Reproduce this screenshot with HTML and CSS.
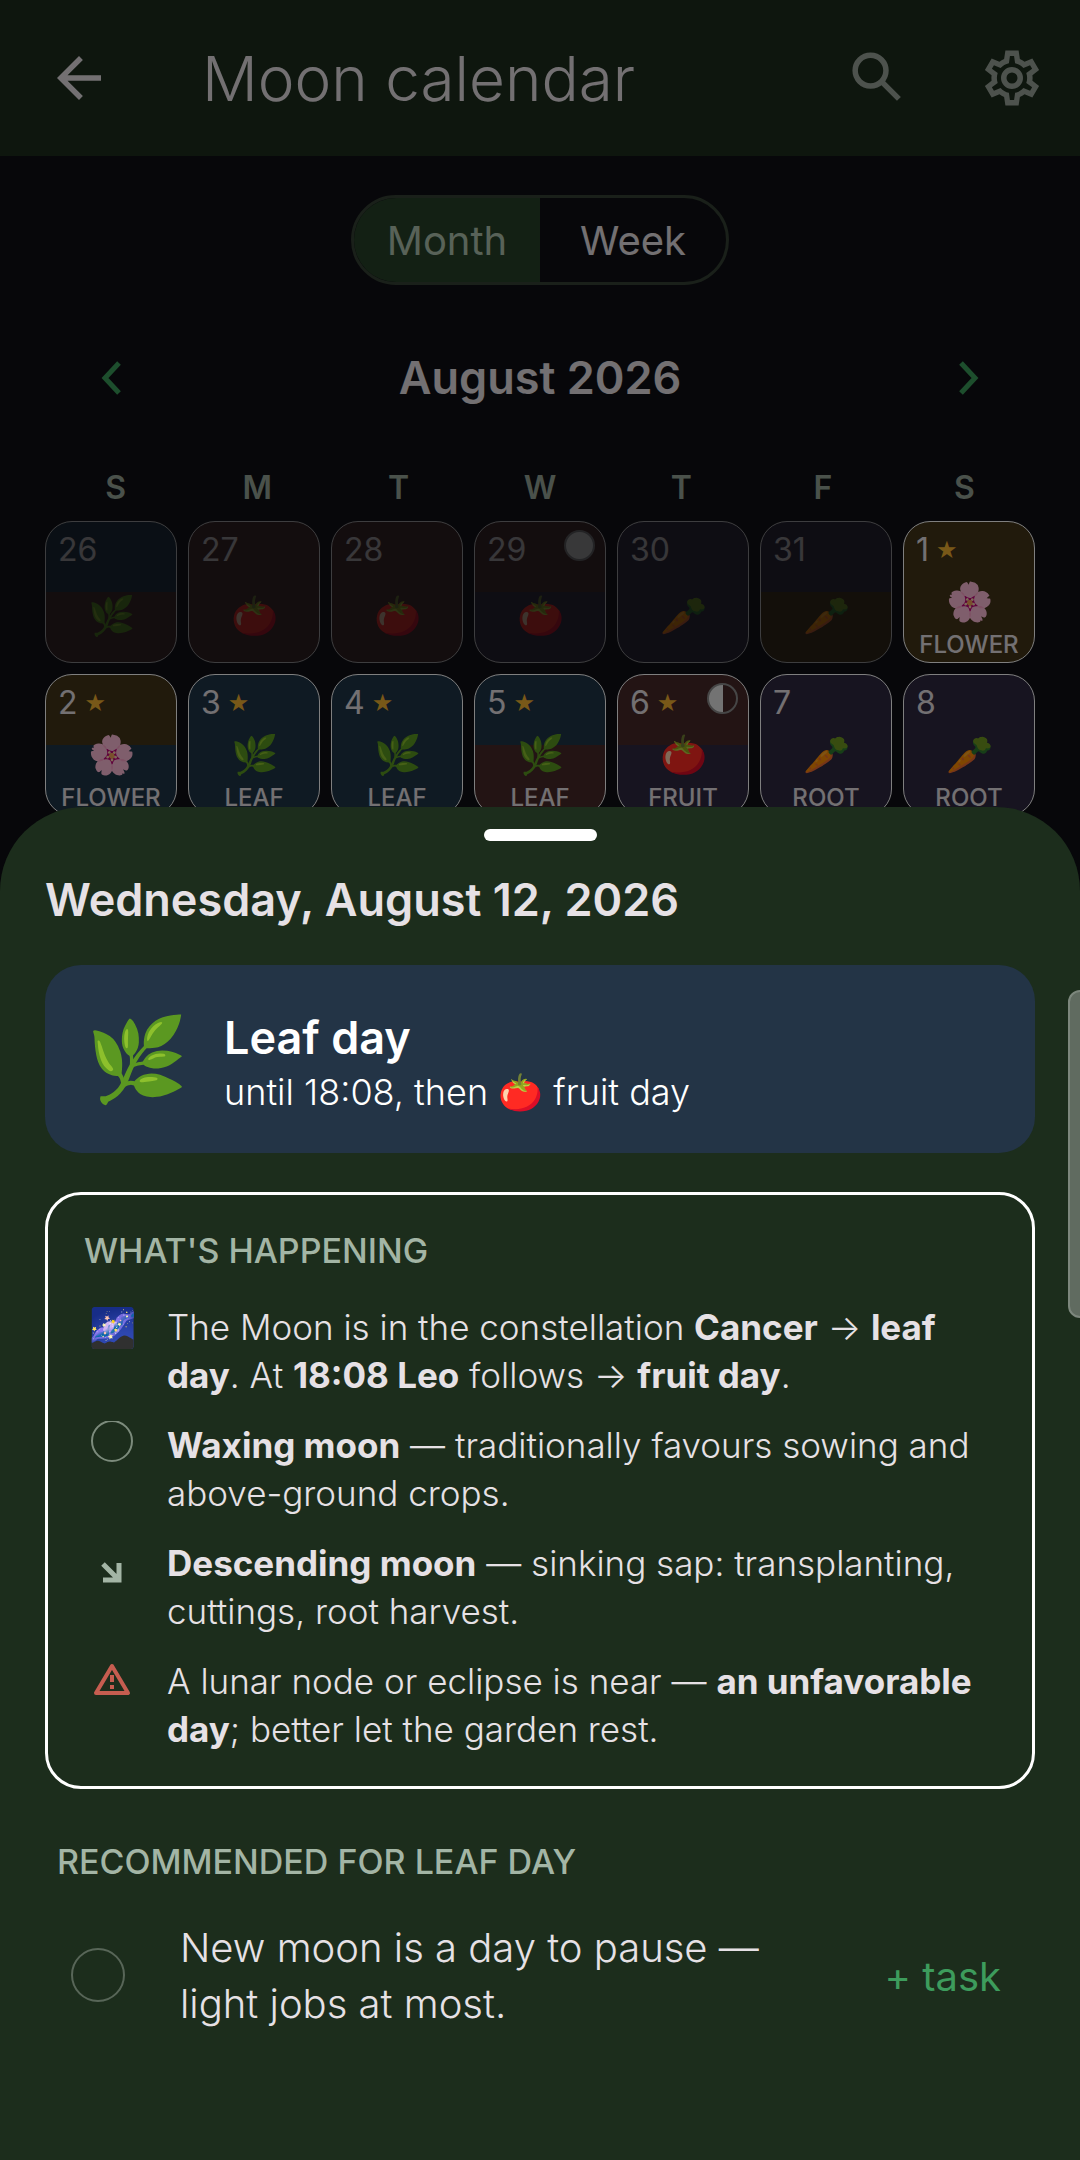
FILE: index.html
```
<!DOCTYPE html>
<html lang="en">
<head>
  <meta charset="UTF-8">
  <meta name="viewport" content="width=device-width, initial-scale=1.0">
  <title>Moon calendar</title>
  <link rel="stylesheet" href="styles.css">
</head>
<body>
  <header class="app-bar">
    <button class="icon-btn back" aria-label="Back">
      <svg viewBox="0 0 24 24" fill="currentColor"><path d="M20 11H7.83l5.59-5.59L12 4l-8 8 8 8 1.41-1.41L7.83 13H20v-2z"/></svg>
    </button>
    <h1>Moon calendar</h1>
    <button class="icon-btn" aria-label="Search">
      <svg viewBox="0 0 24 24" fill="none" stroke="currentColor" stroke-width="2"><circle cx="9.3" cy="9.3" r="5.6"/><path d="M13.4 13.4 19.6 19.6"/></svg>
    </button>
    <button class="icon-btn" aria-label="Settings">
      <svg viewBox="0 0 24 24" fill="currentColor" fill-rule="evenodd"><path d="M12 8a4 4 0 1 1 0 8 4 4 0 0 1 0-8m0 2a2 2 0 1 0 0 4 2 2 0 0 0 0-4M9.6 22 9.13 18.93C8.5 18.68 7.96 18.34 7.44 17.94L4.6 19.1 2.15 14.9 4.57 12.97 4.5 12 4.57 11 2.15 9.1 4.6 4.9 7.44 6.05C7.96 5.66 8.5 5.32 9.13 5.07L9.6 2H14.4L14.87 5.07C15.5 5.32 16.04 5.66 16.56 6.05L19.4 4.9 21.85 9.1 19.43 11 19.5 12 19.43 13 21.85 14.9 19.4 19.1 16.56 17.95C16.04 18.34 15.5 18.68 14.87 18.93L14.4 22H9.6M11.25 4L10.88 6.61C9.68 6.86 8.62 7.5 7.85 8.39L5.44 7.35 4.69 8.65 6.8 10.2C6.4 11.37 6.4 12.64 6.8 13.8L4.68 15.36 5.43 16.66 7.86 15.62C8.63 16.5 9.68 17.14 10.87 17.38L11.24 20H12.76L13.13 17.39C14.32 17.14 15.37 16.5 16.14 15.62L18.57 16.66 19.32 15.36 17.2 13.81C17.6 12.64 17.6 11.37 17.2 10.2L19.31 8.65 18.56 7.35 16.15 8.39C15.38 7.5 14.32 6.86 13.12 6.62L12.75 4H11.25Z"/></svg>
    </button>
  </header>

  <main class="calendar">
    <div class="view-toggle">
      <button class="active" aria-pressed="true">Month</button>
      <button aria-pressed="false">Week</button>
    </div>

    <div class="month-nav">
      <button aria-label="Previous month">
        <svg viewBox="0 0 20 34" fill="none" stroke="currentColor" stroke-width="5"><path d="M18 2 4 17l14 15"/></svg>
      </button>
      <h2>August 2026</h2>
      <button aria-label="Next month">
        <svg viewBox="0 0 20 34" fill="none" stroke="currentColor" stroke-width="5"><path d="M2 2l14 15L2 32"/></svg>
      </button>
    </div>

    <div class="weekdays">
      <span>S</span><span>M</span><span>T</span><span>W</span><span>T</span><span>F</span><span>S</span>
    </div>

    <div class="days">
      <button class="day leaf to-fruit outside"><span class="num">26</span><span class="emoji">🌿</span></button>
      <button class="day fruit outside"><span class="num">27</span><span class="emoji">🍅</span></button>
      <button class="day fruit outside"><span class="num">28</span><span class="emoji">🍅</span></button>
      <button class="day fruit to-root outside"><span class="num">29</span><span class="emoji">🍅</span><i class="phase full"></i></button>
      <button class="day root outside"><span class="num">30</span><span class="emoji">🥕</span></button>
      <button class="day root to-flower outside"><span class="num">31</span><span class="emoji">🥕</span></button>
      <button class="day flower"><span class="num">1<span class="star">★</span></span><span class="emoji">🌸</span><span class="type">FLOWER</span></button>

      <button class="day flower to-leaf"><span class="num">2<span class="star">★</span></span><span class="emoji">🌸</span><span class="type">FLOWER</span></button>
      <button class="day leaf"><span class="num">3<span class="star">★</span></span><span class="emoji">🌿</span><span class="type">LEAF</span></button>
      <button class="day leaf"><span class="num">4<span class="star">★</span></span><span class="emoji">🌿</span><span class="type">LEAF</span></button>
      <button class="day leaf to-fruit"><span class="num">5<span class="star">★</span></span><span class="emoji">🌿</span><span class="type">LEAF</span></button>
      <button class="day fruit to-root"><span class="num">6<span class="star">★</span></span><span class="emoji">🍅</span><span class="type">FRUIT</span><i class="phase half"></i></button>
      <button class="day root"><span class="num">7</span><span class="emoji">🥕</span><span class="type">ROOT</span></button>
      <button class="day root"><span class="num">8</span><span class="emoji">🥕</span><span class="type">ROOT</span></button>
    </div>
  </main>

  <div class="scrim"></div>

  <section class="sheet">
    <div class="handle"></div>
    <h2>Wednesday, August 12, 2026</h2>

    <div class="day-card">
      <span class="day-emoji">🌿</span>
      <div class="day-text">
        <h3>Leaf day</h3>
        <p>until 18:08, then 🍅 fruit day</p>
      </div>
    </div>

    <div class="happening">
      <h4>WHAT'S HAPPENING</h4>
      <ul>
        <li>
          <span class="mark">🌌</span>
          <p>The Moon is in the constellation <b>Cancer</b> → <b>leaf day</b>. At <b>18:08 Leo</b> follows → <b>fruit day</b>.</p>
        </li>
        <li>
          <svg class="mark moon" viewBox="0 0 48 48" fill="none" stroke="currentColor" stroke-width="2"><circle cx="24" cy="20" r="20"/></svg>
          <p><b>Waxing moon</b> — traditionally favours sowing and above-ground crops.</p>
        </li>
        <li>
          <svg class="mark" viewBox="0 0 48 48" fill="none" stroke="currentColor" stroke-width="5"><path d="M15 25 30 40M31 24V41H15"/></svg>
          <p><b>Descending moon</b> — sinking sap: transplanting, cuttings, root harvest.</p>
        </li>
        <li>
          <svg class="mark warning" viewBox="0 0 48 48" fill="none" stroke="currentColor" stroke-width="4" stroke-linejoin="round"><path d="M24 9 40 36H8Z"/><path d="M24 18v7M24 28v4"/></svg>
          <p>A lunar node or eclipse is near — <b>an unfavorable day</b>; better let the garden rest.</p>
        </li>
      </ul>
    </div>

    <h4 class="section-title">RECOMMENDED FOR LEAF DAY</h4>
    <div class="task">
      <svg class="task-moon" viewBox="0 0 56 56" fill="none" stroke="currentColor" stroke-width="2"><circle cx="28" cy="27" r="26"/></svg>
      <p>New moon is a day to pause — light jobs at most.</p>
      <button>+ task</button>
    </div>
  </section>

  <div class="edge-handle"></div>
</body>
</html>
```
FILE: styles.css
```
* {
  margin: 0;
  padding: 0;
  box-sizing: border-box;
}

body {
  background: #0f0f14;
  color: #e6e1e5;
  font-family: Inter, 'Open Sans', sans-serif;
  font-weight: 300;
  min-height: 100vh;
  overflow: hidden;
}

button {
  background: none;
  border: none;
  color: inherit;
  font: inherit;
  cursor: pointer;
}

svg {
  display: block;
}

/* App bar */
.app-bar {
  display: flex;
  align-items: center;
  gap: 68px;
  height: 156px;
  padding: 0 35px 0 46px;
  background: #1c2c1c;
}

.app-bar h1 {
  flex: 1;
  margin-left: 22px;
  font-size: 62px;
  font-weight: 300;
}

.icon-btn {
  width: 66px;
  height: 66px;
  color: #9ba59b;
}

.icon-btn.back {
  color: #e6e1e5;
}

/* Month view */
.calendar {
  padding: 39px 45px;
}

.view-toggle {
  display: flex;
  width: 378px;
  height: 90px;
  margin: 0 auto;
  border: 3px solid #344034;
  border-radius: 45px;
  overflow: hidden;
}

.view-toggle button {
  flex: 1;
  font-size: 40px;
  font-weight: 400;
}

.view-toggle .active {
  background: #264028;
  color: #b0c4b0;
}

.month-nav {
  display: flex;
  align-items: center;
  justify-content: space-between;
  margin-top: 63px;
  padding: 0 56px;
}

.month-nav h2 {
  font-size: 45px;
  font-weight: 600;
  line-height: 60px;
}

.month-nav button {
  width: 20px;
  color: #3a9c5a;
}

.weekdays {
  display: grid;
  grid-template-columns: repeat(7, 1fr);
  margin-top: 60px;
  font-size: 32px;
  font-weight: 600;
  line-height: 40px;
  text-align: center;
  color: #94a396;
}

.days {
  display: grid;
  grid-template-columns: repeat(7, 1fr);
  gap: 11px;
  margin-top: 13px;
}

.day {
  --from: #2e2840;
  --to: var(--from);
  position: relative;
  display: flex;
  flex-direction: column;
  height: 142px;
  padding: 8px 0 3px;
  border: 1px solid #ffffff;
  border-radius: 27px;
  background: linear-gradient(var(--from) 50%, var(--to) 50%);
}

.leaf { --from: #1e3446; }
.fruit { --from: #462828; }
.root { --from: #2e2840; }
.flower { --from: #423418; }
.to-leaf { --to: #1e3446; }
.to-fruit { --to: #462828; }
.to-root { --to: #2e2840; }
.to-flower { --to: #423418; }

.day.outside {
  opacity: 0.45;
}

.num {
  display: flex;
  align-items: center;
  gap: 7px;
  padding-left: 12px;
  font-size: 32px;
  font-weight: 400;
  line-height: 40px;
}

.star {
  font-family: 'DejaVu Sans', sans-serif;
  font-size: 24px;
  color: #f0b030;
}

.day .emoji {
  flex: 1;
  display: flex;
  align-items: center;
  justify-content: center;
  font-size: 38px;
  line-height: 40px;
}

.type {
  font-size: 24px;
  font-weight: 500;
  line-height: 28px;
  text-align: center;
}

.phase {
  position: absolute;
  top: 8px;
  right: 10px;
  width: 31px;
  height: 31px;
  border: 2px solid #8c8c8c;
  border-radius: 50%;
}

.phase.full {
  background: #e6e6e6;
}

.phase.half {
  background: linear-gradient(90deg, #e6e6e6 50%, transparent 50%);
}

.scrim {
  position: fixed;
  inset: 0;
  background: rgba(0, 0, 0, 0.5);
}

/* Bottom sheet */
.sheet {
  position: fixed;
  left: 0;
  right: 0;
  bottom: 0;
  padding: 22px 45px 128px;
  background: #1c2d1c;
  border-radius: 84px 84px 0 0;
}

.handle {
  width: 113px;
  height: 12px;
  margin: 0 auto;
  border-radius: 6px;
  background: #ffffff;
}

.sheet h2 {
  margin-top: 29px;
  font-size: 45px;
  font-weight: 600;
  line-height: 60px;
}

.day-card {
  display: flex;
  align-items: center;
  gap: 36px;
  height: 188px;
  margin-top: 35px;
  padding: 0 41px;
  border-radius: 36px;
  background: #233446;
  color: #ffffff;
}

.day-emoji {
  font-size: 82px;
  line-height: 96px;
}

.day-text {
  padding-top: 6px;
}

.day-card h3 {
  font-size: 45px;
  font-weight: 600;
  line-height: 60px;
}

.day-card p {
  font-size: 36px;
  line-height: 48px;
}

.happening {
  margin-top: 39px;
  padding: 36px 33px 33px 36px;
  border: 3px solid #ffffff;
  border-radius: 36px;
}

.sheet h4 {
  font-size: 34px;
  font-weight: 500;
  line-height: 40px;
  color: #a3b5a5;
}

.happening ul {
  display: flex;
  flex-direction: column;
  gap: 22px;
  margin-top: 32px;
  list-style: none;
}

.happening li {
  display: flex;
  gap: 31px;
  font-size: 35px;
  line-height: 48px;
}

.happening p {
  flex: 1;
}

.happening b {
  font-weight: 700;
}

.mark {
  flex: none;
  width: 48px;
  height: 48px;
  margin-left: 4px;
  font-size: 38px;
  text-align: center;
  color: #a3b5a5;
}

.mark.moon {
  color: #7c8b7c;
}

.mark.warning {
  color: #c65d50;
}

.sheet .section-title {
  margin: 53px 12px 0;
}

.task {
  display: flex;
  align-items: center;
  gap: 54px;
  margin-top: 38px;
  padding: 0 34px 0 25px;
}

.task-moon {
  width: 56px;
  height: 56px;
  color: #586658;
}

.task p {
  flex: 1;
  font-size: 40px;
  line-height: 56px;
}

.task button {
  font-size: 40px;
  font-weight: 400;
  color: #3d9c5c;
}

/* Edge panel grip on the side of the screen */
.edge-handle {
  position: fixed;
  top: 990px;
  right: -4px;
  width: 16px;
  height: 328px;
  border: 2px solid #7d877d;
  border-radius: 12px 0 0 12px;
  background: #606b60;
}
```
